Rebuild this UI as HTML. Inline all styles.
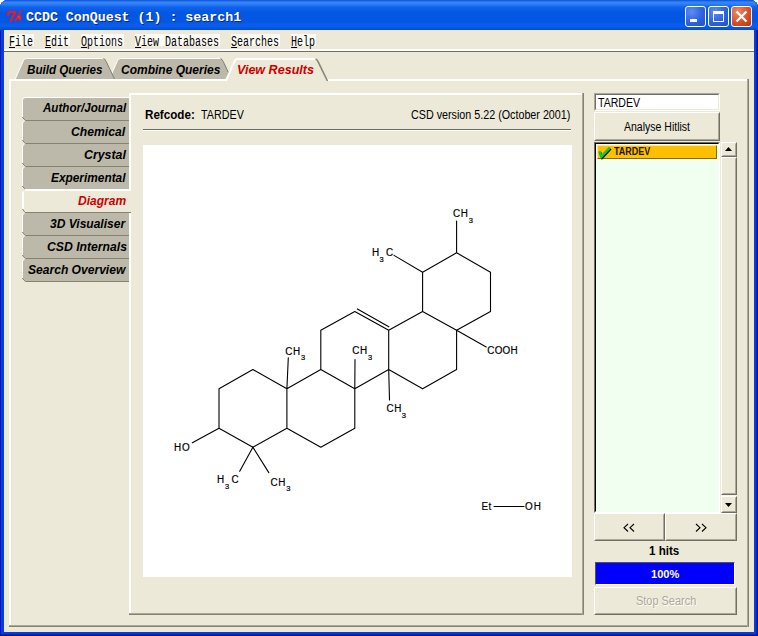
<!DOCTYPE html>
<html>
<head>
<meta charset="utf-8">
<title>CCDC ConQuest (1) : search1</title>
<style>
html,body{margin:0;padding:0;}
body{width:758px;height:636px;overflow:hidden;position:relative;background:#fff;font-family:"Liberation Sans",sans-serif;font-size:12px;color:#000;}
.abs{position:absolute;}
.tx{white-space:pre;transform-origin:0 0;}
#frame{left:0;top:0;width:758px;height:636px;background:#0A3CDC;border-radius:8px 8px 0 0;box-shadow:inset 1px 0 0 #0019B0, inset -1px 0 0 #001484, inset 0 -1px 0 #001484, inset -2px 0 0 #0028C0, inset 0 -2px 0 #0028C0;}
#titlebar{left:0;top:0;width:758px;height:30px;background:linear-gradient(to bottom,#0A50D8 0%,#3585F7 7%,#3181F5 13%,#0E62EC 24%,#0457E2 42%,#0457E2 72%,#0A60EE 87%,#0848D2 100%);border-radius:8px 8px 0 0;}
#client{left:4px;top:30px;width:750px;height:602px;background:#ECE9D8;}
.hl{background:#fff;}
.wb{top:6px;width:21px;height:21px;box-sizing:border-box;border:1px solid #fff;border-radius:3px;background:radial-gradient(circle at 30% 25%,#5C8CF5 0%,#2E62E0 55%,#2050CC 100%);}
.sunk{box-sizing:border-box;border:1px solid;border-color:#ACA899 #fff #fff #ACA899;}
.sunk>i{display:block;position:absolute;left:0;top:0;right:0;bottom:0;border:1px solid;border-color:#716F64 #ECE9D8 #ECE9D8 #716F64;}
.rb{box-sizing:border-box;border:1px solid;border-color:#fff #716F64 #716F64 #fff;}
.rb>i{display:block;position:absolute;left:0;top:0;right:0;bottom:0;border:1px solid;border-color:#ECE9D8 #ACA899 #ACA899 #ECE9D8;}
</style>
</head>
<body>
<div id="frame" class="abs"></div>
<div id="titlebar" class="abs"></div>
<div id="client" class="abs"></div>
<!-- Tk icon -->
<svg class="abs" style="left:6px;top:10px;" width="17" height="13" viewBox="6 10 17 13">
<path d="M7,12 C9.5,10.8 12.5,11 16,11.2 L15.6,13.2 C12.8,13 10.8,13 9.2,13.6 L9.2,15.6 L7.4,15.8 Z" fill="#FF1414"/>
<path d="M15.2,12.2 L10.4,21.6" fill="none" stroke="#FF1414" stroke-width="1.9" stroke-linecap="round"/>
<path d="M20.8,11 L15.4,20.8" fill="none" stroke="#FF1414" stroke-width="1.5" stroke-linecap="round"/>
<path d="M16.6,16.8 L18.6,14.6 L20.6,15 L21.2,17.6 L20.8,20.4 L19.4,21.2 L18.6,19 L16,20.6 Z" fill="#FF1414"/>
<rect x="18.2" y="16.2" width="0.9" height="0.9" fill="#7A8CF0"/><rect x="19.4" y="17.4" width="0.9" height="0.9" fill="#7A8CF0"/>
</svg>
<div class="abs tx" style="left:26.10px;top:9.6px;font-family:'Liberation Mono';font-weight:bold;font-size:13px;line-height:15px;transform:scaleX(1.0214);color:#fff;text-shadow:1px 1px 0 #0A2A8C;">CCDC ConQuest (1) : search1</div>

<!-- window buttons -->
<div class="abs wb" style="left:685px;"></div>
<div class="abs wb" style="left:708px;"></div>
<div class="abs wb" style="left:731px;background:radial-gradient(circle at 30% 25%,#F08A68 0%,#DC4E28 55%,#B83414 100%);"></div>
<div class="abs hl" style="left:690px;top:19px;width:7px;height:3px;"></div>
<div class="abs" style="left:713px;top:11px;width:11px;height:11px;box-sizing:border-box;border:1px solid #fff;border-top-width:3px;"></div>
<svg class="abs" style="left:735px;top:10px;" width="13" height="13" viewBox="0 0 13 13"><path d="M1.5,1.5 L11.5,11.5 M11.5,1.5 L1.5,11.5" stroke="#fff" stroke-width="2.2" fill="none"/></svg>

<!-- menu -->
<div class="abs" id="menu" style="left:0;top:0;">
<div class="abs" style="left:9px;top:34px;width:25px;height:12px;background:#FBFAF4;"></div>
<div class="abs" style="left:45px;top:34px;width:25px;height:12px;background:#FBFAF4;"></div>
<div class="abs" style="left:81px;top:34px;width:43px;height:12px;background:#FBFAF4;"></div>
<div class="abs" style="left:135px;top:34px;width:85px;height:12px;background:#FBFAF4;"></div>
<div class="abs" style="left:231px;top:34px;width:49px;height:12px;background:#FBFAF4;"></div>
<div class="abs" style="left:291px;top:34px;width:25px;height:12px;background:#FBFAF4;"></div>
</div>
<div class="abs tx" style="left:9.19px;top:34px;font-family:'Liberation Mono';font-size:14px;line-height:16px;transform:scaleX(0.7143);"><u>F</u>ile  <u>E</u>dit  <u>O</u>ptions  <u>V</u>iew Databases  <u>S</u>earches  <u>H</u>elp</div>
<div class="abs hl" style="left:4px;top:49px;width:750px;height:2px;"></div>
<div class="abs" style="left:4px;top:51px;width:750px;height:1px;background:#716F64;"></div>

<!-- outer panel -->
<div class="abs hl" style="left:9px;top:79px;width:740px;height:2px;"></div>
<div class="abs hl" style="left:9px;top:80px;width:2px;height:547px;"></div>
<div class="abs" style="left:9px;top:625px;width:740px;height:1px;background:#ACA899;"></div>
<div class="abs" style="left:9px;top:626px;width:740px;height:1px;background:#85826F;"></div>
<div class="abs" style="left:747px;top:79px;width:1px;height:548px;background:#ACA899;"></div>
<div class="abs" style="left:748px;top:79px;width:1px;height:548px;background:#85826F;"></div>

<!-- top tabs -->
<svg class="abs" style="left:0;top:52px;" width="758" height="40" viewBox="0 52 758 40">
<path d="M109.4,79 L117.0,61.7 Q117.8,58.5 120.5,58.5 L220.5,58.5 Q222.0,58.8 223.3,61.7 Q226.5,68.5 231.5,79 Z" fill="#BCB9AA"/>
<path d="M109.4,79 L117.0,61.7 Q117.8,58.5 120.5,58.5 L220.5,58.5" fill="none" stroke="#fff" stroke-width="1"/>
<path d="M220.5,58.5 Q222.0,58.8 223.3,61.7 Q226.5,68.5 231.5,79" fill="none" stroke="#807E70" stroke-width="1"/>
<path d="M15.3,79 L22.9,61.7 Q23.7,58.5 26.4,58.5 L103.5,58.5 Q105.0,58.8 106.3,61.7 Q109.5,68.5 114.5,79 Z" fill="#BCB9AA"/>
<path d="M15.3,79 L22.9,61.7 Q23.7,58.5 26.4,58.5 L103.5,58.5" fill="none" stroke="#fff" stroke-width="1"/>
<path d="M103.5,58.5 Q105.0,58.8 106.3,61.7 Q109.5,68.5 114.5,79" fill="none" stroke="#807E70" stroke-width="1"/>
<path d="M225.8,81 L234.2,62.2 Q235.0,59 237.7,59 L315.5,59 Q317.0,59.3 318.3,62.2 Q321.5,69 327.5,81 Z" fill="#ECE9D8"/>
<path d="M225.8,81 L234.2,62.2 Q235.0,59 237.7,59 L315.5,59" fill="none" stroke="#fff" stroke-width="2"/>
<path d="M315.5,59 Q317.0,59.3 318.3,62.2 Q321.5,69 327.5,81" fill="none" stroke="#8A8878" stroke-width="1.6"/>
</svg>
<div class="abs tx" style="left:26.60px;top:63px;font-family:'Liberation Sans';font-weight:bold;font-style:italic;font-size:12px;line-height:14px;transform:scaleX(0.9667);">Build Queries</div>
<div class="abs tx" style="left:121.00px;top:63px;font-family:'Liberation Sans';font-weight:bold;font-style:italic;font-size:12px;line-height:14px;transform:scaleX(1.0000);">Combine Queries</div>
<div class="abs tx" style="left:237.45px;top:63px;font-family:'Liberation Sans';font-weight:bold;font-style:italic;font-size:12px;line-height:14px;transform:scaleX(1.0458);color:#CC0000;">View Results</div>

<!-- inner panel -->
<div class="abs hl" style="left:129px;top:93px;width:455px;height:2px;"></div>
<div class="abs hl" style="left:129px;top:93px;width:2px;height:522px;"></div>
<div class="abs" style="left:129px;top:613px;width:455px;height:1px;background:#ACA899;"></div>
<div class="abs" style="left:129px;top:614px;width:455px;height:1px;background:#85826F;"></div>
<div class="abs" style="left:582px;top:93px;width:1px;height:522px;background:#ACA899;"></div>
<div class="abs" style="left:583px;top:93px;width:1px;height:522px;background:#85826F;"></div>
<!-- side tabs -->
<svg class="abs" style="left:14px;top:90px;" width="120" height="200" viewBox="14 90 120 200">
<path d="M129,98 L129,120 L25.5,120 L23,117.5 L23,100.5 C23,99 24,98 25.5,98 Z" fill="#BCB9AA"/>
<path d="M129,97.5 L25.5,97.5 C23.5,97.5 22.5,98.5 22.5,100.5 L22.5,117" stroke="#fff" stroke-width="1" fill="none"/>
<path d="M22.3,117 L25.3,120.5 L129,120.5" stroke="#85826F" stroke-width="1" fill="none"/>
<path d="M129,121 L129,143 L25.5,143 L23,140.5 L23,123.5 C23,122 24,121 25.5,121 Z" fill="#BCB9AA"/>
<path d="M24.5,121.2 C23.2,121.6 22.5,122.5 22.5,124 L22.5,140" stroke="#fff" stroke-width="1" fill="none"/>
<path d="M22.3,140 L25.3,143.5 L129,143.5" stroke="#85826F" stroke-width="1" fill="none"/>
<path d="M129,144 L129,166 L25.5,166 L23,163.5 L23,146.5 C23,145 24,144 25.5,144 Z" fill="#BCB9AA"/>
<path d="M24.5,144.2 C23.2,144.6 22.5,145.5 22.5,147 L22.5,163" stroke="#fff" stroke-width="1" fill="none"/>
<path d="M22.3,163 L25.3,166.5 L129,166.5" stroke="#85826F" stroke-width="1" fill="none"/>
<path d="M129,167 L129,189 L25.5,189 L23,186.5 L23,169.5 C23,168 24,167 25.5,167 Z" fill="#BCB9AA"/>
<path d="M24.5,167.2 C23.2,167.6 22.5,168.5 22.5,170 L22.5,186" stroke="#fff" stroke-width="1" fill="none"/>
<path d="M22.3,186 L25.3,189.5 L129,189.5" stroke="#85826F" stroke-width="1" fill="none"/>
<rect x="22" y="189" width="109" height="24" fill="#ECE9D8"/>
<path d="M131,190 L25,190 M23,191.5 L23,209" stroke="#fff" stroke-width="2" fill="none"/>
<path d="M22.5,209 L25,212.5 L131,212.5" stroke="#85826F" stroke-width="1" fill="none"/>
<path d="M129,213 L129,235 L25.5,235 L23,232.5 L23,215.5 C23,214 24,213 25.5,213 Z" fill="#BCB9AA"/>
<path d="M24.5,213.2 C23.2,213.6 22.5,214.5 22.5,216 L22.5,232" stroke="#fff" stroke-width="1" fill="none"/>
<path d="M22.3,232 L25.3,235.5 L129,235.5" stroke="#85826F" stroke-width="1" fill="none"/>
<path d="M129,236 L129,258 L25.5,258 L23,255.5 L23,238.5 C23,237 24,236 25.5,236 Z" fill="#BCB9AA"/>
<path d="M24.5,236.2 C23.2,236.6 22.5,237.5 22.5,239 L22.5,255" stroke="#fff" stroke-width="1" fill="none"/>
<path d="M22.3,255 L25.3,258.5 L129,258.5" stroke="#85826F" stroke-width="1" fill="none"/>
<path d="M129,259 L129,281 L25.5,281 L23,278.5 L23,261.5 C23,260 24,259 25.5,259 Z" fill="#BCB9AA"/>
<path d="M24.5,259.2 C23.2,259.6 22.5,260.5 22.5,262 L22.5,278" stroke="#fff" stroke-width="1" fill="none"/>
<path d="M22.3,278 L25.3,281.5 L129,281.5" stroke="#85826F" stroke-width="1" fill="none"/>
</svg>
<div class="abs tx" style="left:42.60px;top:101px;font-family:'Liberation Sans';font-weight:bold;font-style:italic;font-size:12px;line-height:14px;transform:scaleX(0.9663);">Author/Journal</div>
<div class="abs tx" style="left:71.49px;top:125px;font-family:'Liberation Sans';font-weight:bold;font-style:italic;font-size:12px;line-height:14px;transform:scaleX(1.0132);">Chemical</div>
<div class="abs tx" style="left:83.97px;top:148px;font-family:'Liberation Sans';font-weight:bold;font-style:italic;font-size:12px;line-height:14px;transform:scaleX(1.0300);">Crystal</div>
<div class="abs tx" style="left:51.40px;top:171px;font-family:'Liberation Sans';font-weight:bold;font-style:italic;font-size:12px;line-height:14px;transform:scaleX(0.9882);">Experimental</div>
<div class="abs tx" style="left:77.80px;top:194px;font-family:'Liberation Sans';font-weight:bold;font-style:italic;font-size:12px;line-height:14px;transform:scaleX(1.0021);color:#CC0000;">Diagram</div>
<div class="abs tx" style="left:49.80px;top:217px;font-family:'Liberation Sans';font-weight:bold;font-style:italic;font-size:12px;line-height:14px;transform:scaleX(1.0026);">3D Visualiser</div>
<div class="abs tx" style="left:46.68px;top:240px;font-family:'Liberation Sans';font-weight:bold;font-style:italic;font-size:12px;line-height:14px;transform:scaleX(1.0169);">CSD Internals</div>
<div class="abs tx" style="left:27.90px;top:263px;font-family:'Liberation Sans';font-weight:bold;font-style:italic;font-size:12px;line-height:14px;transform:scaleX(1.0061);">Search Overview</div>

<div class="abs tx" style="left:145.33px;top:108px;font-family:'Liberation Sans';font-weight:bold;font-size:12px;line-height:14px;transform:scaleX(0.9694);">Refcode:</div>

<div class="abs tx" style="left:201.00px;top:108px;font-family:'Liberation Sans';font-size:12px;line-height:14px;transform:scaleX(0.8958);">TARDEV</div>

<div class="abs tx" style="left:411.41px;top:108px;font-family:'Liberation Sans';font-size:12px;line-height:14px;transform:scaleX(0.8949);">CSD version 5.22 (October 2001)</div>

<div class="abs" style="left:143px;top:129px;width:428px;height:1px;background:#6F6D60;"></div>
<div class="abs" style="left:143px;top:130px;width:428px;height:1px;background:#fff;"></div>
<div class="abs" style="left:143px;top:145px;width:429px;height:432px;background:#fff;"></div>
<!-- molecule -->
<svg class="abs" id="mol" style="left:143px;top:145px;" width="429" height="432" viewBox="143 145 429 432">
<g fill="none" stroke="#000" stroke-width="1.1" stroke-linecap="round">
<path d="M219.0,388.8L219.0,428.2M219.0,388.8L252.9,369.5M219.0,428.2L252.9,447.2M252.9,369.5L286.9,388.8M252.9,447.2L286.9,428.2M286.9,388.8L286.9,428.2M286.9,388.8L320.8,369.5M286.9,428.2L320.8,447.2M320.8,330.2L320.8,369.5M320.8,330.2L354.8,311.5M320.8,369.5L354.8,388.8M320.8,447.2L354.8,428.2M354.8,311.5L388.7,330.2M354.8,388.8L354.8,428.2M354.8,388.8L388.7,369.5M388.7,330.2L388.7,369.5M388.7,330.2L422.6,311.5M388.7,369.5L422.6,388.8M422.6,272.2L422.6,311.5M422.6,272.2L456.6,252.8M422.6,311.5L456.6,330.2M422.6,388.8L456.6,369.5M456.6,252.8L490.5,272.2M456.6,330.2L456.6,369.5M456.6,330.2L490.5,311.5M490.5,272.2L490.5,311.5M456.6,252.8L456.6,221.0M422.6,272.2L394.0,255.4M456.6,330.2L486.2,347.0M354.8,388.8L355.0,359.5M388.7,369.5L389.5,400.0M286.9,388.8L288.3,357.8M219.0,428.2L192.3,442.7M252.9,447.2L239.7,471.3M252.9,447.2L268.8,472.6M494.0,506.5L524.0,506.5M357.4,308.9L388.8,326.8"/>
</g>
<g font-family="Liberation Sans, sans-serif" font-size="11" fill="#000" stroke="#000" stroke-width="0.2">
<text transform="translate(453.05,217.0) scale(0.9,1)" letter-spacing="0.6">CH</text><text x="468.8" y="223.0" font-size="7.5">3</text>
<text transform="translate(372.02,256.0) scale(0.9,1)" letter-spacing="0.6">H</text><text x="379.4" y="261.8" font-size="7.5">3</text><text transform="translate(386.05,256.0) scale(0.9,1)" letter-spacing="0.6">C</text>
<text transform="translate(487.25,354.0) scale(0.9,1)" letter-spacing="0.3">COOH</text>
<text transform="translate(352.25,354.0) scale(0.9,1)" letter-spacing="0.6">CH</text><text x="368.1" y="359.5" font-size="7.5">3</text>
<text transform="translate(386.55,412.0) scale(0.9,1)" letter-spacing="0.6">CH</text><text x="401.7" y="417.6" font-size="7.5">3</text>
<text transform="translate(285.25,354.5) scale(0.9,1)" letter-spacing="0.6">CH</text><text x="301.0" y="360.0" font-size="7.5">3</text>
<text transform="translate(174.12,451.0) scale(0.9,1)" letter-spacing="0.9">HO</text>
<text transform="translate(216.92,483.0) scale(0.9,1)" letter-spacing="0.6">H</text><text x="224.9" y="488.8" font-size="7.5">3</text><text transform="translate(231.55,483.0) scale(0.9,1)" letter-spacing="0.6">C</text>
<text transform="translate(270.45,485.5) scale(0.9,1)" letter-spacing="0.6">CH</text><text x="286.2" y="491.4" font-size="7.5">3</text>
<text transform="translate(481.39,510.0) scale(0.9,1)" letter-spacing="0.5">Et</text><text transform="translate(524.92,510.0) scale(0.9,1)" letter-spacing="1.2">OH</text>
</g>
</svg>

<!-- right panel -->
<div class="abs sunk" style="left:594px;top:93px;width:126px;height:18px;background:#fff;"><i></i></div>
<div class="abs tx" style="left:598.20px;top:95.5px;font-family:'Liberation Sans';font-size:12px;line-height:14px;transform:scaleX(0.8812);">TARDEV</div>

<div class="abs rb" style="left:594px;top:112px;width:126px;height:29px;"><i></i></div>
<div class="abs tx" style="left:623.80px;top:120px;font-family:'Liberation Sans';font-size:12px;line-height:14px;transform:scaleX(0.8760);">Analyse Hitlist</div>

<div class="abs sunk" style="left:594px;top:142px;width:126px;height:371px;background:#F0FFF0;border-color:#716F64 #fff #fff #716F64;"><i style="border-color:#000 #F0FFF0 #F0FFF0 #000;"></i></div>
<div class="abs" style="left:597px;top:145px;width:120px;height:14px;background:#FFC000;border:1px solid;border-color:#FFE48C #8A6A00 #8A6A00 #FFE48C;box-sizing:border-box;"></div>
<svg class="abs" style="left:597px;top:145px;" width="16" height="15" viewBox="597 145 16 15"><path d="M600,152.2 L602.2,157.6 L610.6,148.6" fill="none" stroke="#102000" stroke-width="2.6"/><path d="M599.3,151.2 L601.5,156.4 L609.8,147.6" fill="none" stroke="#1FC23C" stroke-width="2.5"/></svg>
<div class="abs tx" style="left:614.40px;top:145.7px;font-family:'Liberation Sans';font-weight:bold;font-size:10px;line-height:12px;transform:scaleX(0.8975);color:#1a1400;">TARDEV</div>

<!-- scrollbar -->
<div class="abs" style="left:721px;top:142px;width:16px;height:371px;background:#F6F5EC;"></div>
<div class="abs rb" style="left:721px;top:142px;width:16px;height:15px;background:#ECE9D8;"><i></i></div>
<svg class="abs" style="left:725px;top:147px;" width="7" height="4" viewBox="0 0 7 4"><path d="M0,4 L3.5,0 L7,4 Z" fill="#000"/></svg>
<div class="abs rb" style="left:721px;top:157px;width:16px;height:338px;background:#ECE9D8;"><i></i></div>
<div class="abs rb" style="left:721px;top:496px;width:16px;height:17px;background:#ECE9D8;"><i></i></div>
<svg class="abs" style="left:725px;top:503px;" width="7" height="4" viewBox="0 0 7 4"><path d="M0,0 L7,0 L3.5,4 Z" fill="#000"/></svg>
<div class="abs rb" style="left:594px;top:513px;width:71px;height:28px;"><i></i></div>
<div class="abs rb" style="left:665px;top:513px;width:72px;height:28px;"><i></i></div>
<svg class="abs" style="left:620px;top:520px;" width="20" height="14" viewBox="620 520 20 14"><path d="M628,524 L624,527.7 L628,531.5 M634,524 L630,527.7 L634,531.5" fill="none" stroke="#000" stroke-width="1.1"/></svg>
<svg class="abs" style="left:692px;top:520px;" width="20" height="14" viewBox="692 520 20 14"><path d="M696,524 L700,527.7 L696,531.5 M702,524 L706,527.7 L702,531.5" fill="none" stroke="#000" stroke-width="1.1"/></svg>
<div class="abs tx" style="left:648.74px;top:544px;font-family:'Liberation Sans';font-weight:bold;font-size:12px;line-height:14px;transform:scaleX(0.9633);">1 hits</div>

<div class="abs" style="left:595px;top:562px;width:140px;height:23px;background:#0000FF;box-sizing:border-box;border:1px solid;border-color:#55534A #fff #fff #55534A;"></div>
<div class="abs tx" style="left:651.00px;top:568px;font-family:'Liberation Sans';font-weight:bold;font-size:11px;line-height:12px;transform:scaleX(1.0037);color:#fff;">100%</div>

<div class="abs rb" style="left:594px;top:587px;width:143px;height:28px;"><i></i></div>
<div class="abs tx" style="left:635.69px;top:594px;font-family:'Liberation Sans';font-size:12px;line-height:14px;transform:scaleX(0.9125);color:#ACA899;text-shadow:1px 1px 0 #fff;">Stop Search</div>

</body>
</html>
